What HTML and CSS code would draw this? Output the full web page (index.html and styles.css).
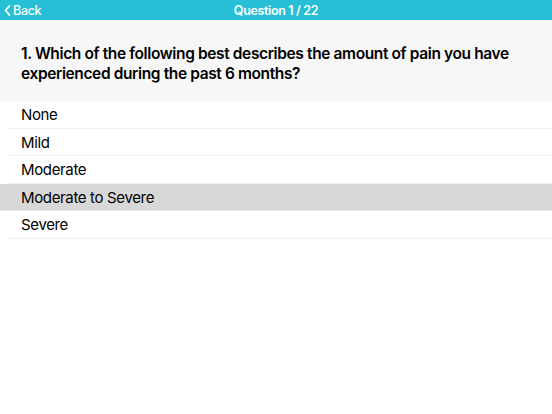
FILE: index.html
```html
<!DOCTYPE html>
<html>
<head>
<meta charset="utf-8">
<link rel="stylesheet" href="styles.css">
</head>
<body>
<div class="app">
  <header class="navbar">
    <a class="back">
      <svg class="chev" width="7" height="11" viewBox="0 0 7 11"><path d="M5.5 1 L1.5 5.5 L5.5 10" fill="none" stroke="#fff" stroke-width="1.8" stroke-linecap="round" stroke-linejoin="round"/></svg>
      <span>Back</span>
    </a>
    <div class="title">Question 1 / 22</div>
  </header>
  <section class="question">
    <h1>1. Which of the following best describes the amount of pain you have experienced during the past 6 months?</h1>
  </section>
  <ul class="options">
    <li class="opt"><span>None</span></li>
    <li class="opt"><span>Mild</span></li>
    <li class="opt"><span>Moderate</span></li>
    <li class="opt selected"><span>Moderate to Severe</span></li>
    <li class="opt"><span>Severe</span></li>
  </ul>
</div>
</body>
</html>
```
FILE: styles.css
```css
* { box-sizing: border-box; }
html, body { margin: 0; padding: 0; background: #fff; }
body { font-family: Inter, "Noto Sans", "Liberation Sans", sans-serif; color: #000; }
.app { width: 552px; height: 414px; display: flex; flex-direction: column; }
.navbar {
  height: 20px;
  background: #27BFD5;
  display: flex;
  align-items: center;
  justify-content: center;
  position: relative;
  color: #fff;
}
.back {
  position: absolute;
  left: 4px;
  top: 0;
  height: 20px;
  display: flex;
  align-items: center;
  gap: 2px;
  font-size: 12.5px;
  font-weight: 500;
  letter-spacing: -0.3px;
}
.chev { display: block; }
.title { font-size: 12.5px; font-weight: 600; letter-spacing: -0.35px; }
.question {
  background: #F7F7F7;
  height: 81px;
  padding: 24px 21px 0 21px;
}
.question h1 {
  margin: 0;
  font-size: 15.5px;
  line-height: 19.5px;
  font-weight: 600;
  letter-spacing: -0.38px;
}
.options { list-style: none; margin: 0; padding: 0; }
.opt {
  height: 27.5px;
  display: flex;
  align-items: center;
  padding-left: 21px;
  font-size: 15px;
  letter-spacing: -0.35px;
  position: relative;
}
.opt::after {
  content: "";
  position: absolute;
  left: 8px;
  right: 0;
  bottom: 0;
  height: 1px;
  background: #EEEEEE;
}
.opt.selected { background: #D8D8D8; }
.opt.selected::after { left: 0; background: #E2E2E2; }
```
